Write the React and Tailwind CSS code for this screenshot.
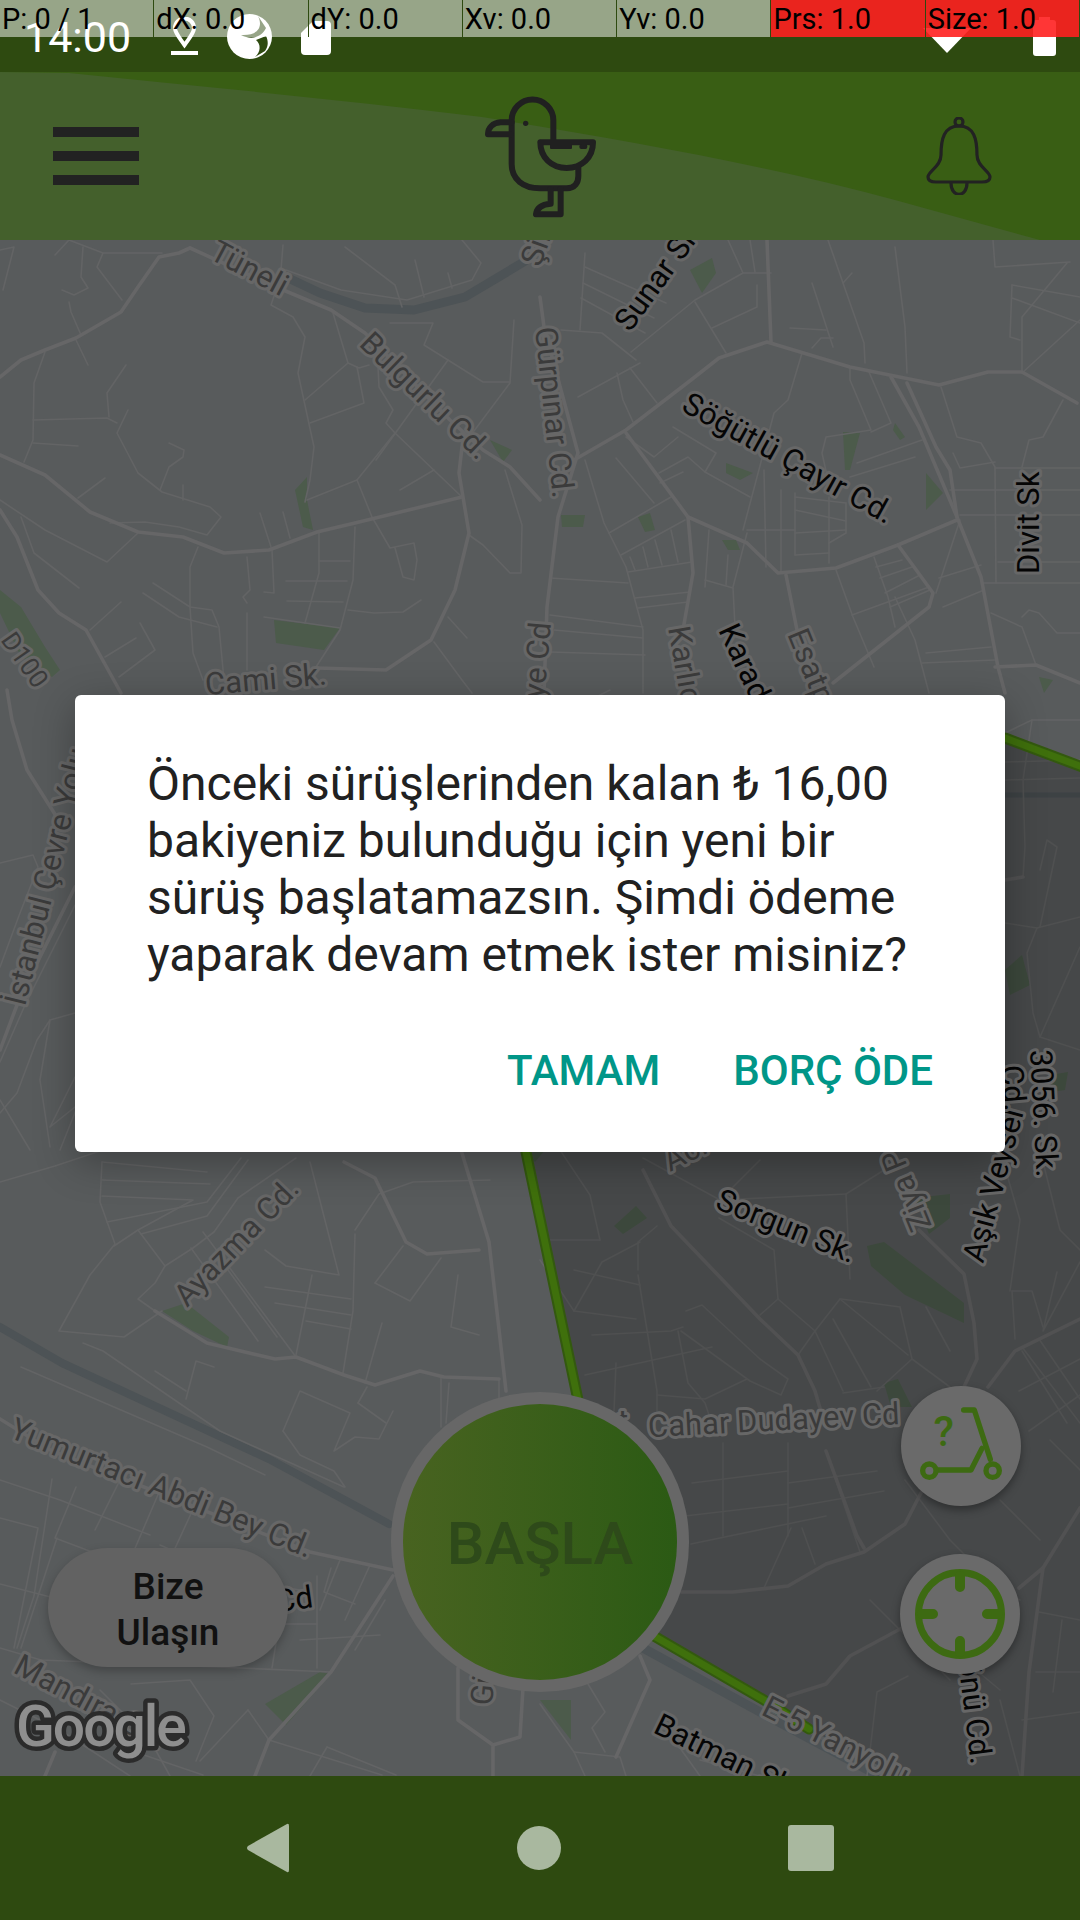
import React from "react";

// pointer location debug strip
const pointerCells = [
  { label: "P: 0 / 1" },
  { label: "dX: 0.0" },
  { label: "dY: 0.0" },
  { label: "Xv: 0.0" },
  { label: "Yv: 0.0" },
  { label: "Prs: 1.0", red: true },
  { label: "Size: 1.0", red: true },
];

const mainRoads = [
  "0,377 21,360 45,350 76,338 121,312 138,287 159,257 179,253 190,248",
  "190,248 276,287 331,310 365,333 450,420 483,450 510,467 540,500",
  "0,455 45,475 90,512 138,532 183,537 224,553 269,550 317,532 355,523 462,497",
  "462,447 459,473 469,533 455,590 431,640 386,670 317,668",
  "0,510 17,537 38,590 59,613 86,630 121,693",
  "540,297 544,327 578,453 558,517 547,607 544,693",
  "574,460 626,430 691,380 719,358 767,342 850,367 939,385 988,372 1022,372 1077,403",
  "767,240 771,342",
  "626,433 688,517 693,573 683,630",
  "688,517 747,543 778,573 836,568 898,545 957,520",
  "891,377 919,427 957,517 981,577 998,667 1005,693",
  "907,383 936,447 950,470 957,517",
  "786,575 797,630",
  "898,545 933,593 929,607 833,683",
  "995,667 1036,665 1080,683",
  "155,1311 207,1343 275,1359 296,1357 344,1375 375,1385 420,1371 444,1377 499,1379",
  "461,1150 489,1242 506,1391",
  "344,1162 375,1178 406,1242 427,1254 479,1250",
  "0,1419 52,1451 310,1552 393,1570",
  "393,1576 331,1672 269,1740 255,1776",
  "643,1170 671,1226 760,1319 798,1355 815,1391 822,1415",
  "826,1451 857,1536 864,1548",
  "681,1592 733,1592 788,1586 826,1564 864,1552 905,1524 922,1491",
  "919,1230 964,1274 974,1323 977,1359 964,1387",
  "988,1387 1015,1351 1080,1319",
  "788,1696 826,1684 850,1656 902,1628",
  "1019,1588 1043,1568 1029,1672 1022,1776",
  "1043,1568 1080,1508",
  "7,690 12,720 27,770 63,827",
  "75,887 20,997 0,1050",
  "458,1668 458,1720 493,1745 493,1776",
  "523,1688 520,1737 493,1745",
  "640,1656 650,1680 616,1757",
  "55,1752 45,1776",
  "1005,880 1023,877",
];

const thinRoads = [
  "69,302 71,312 81,335", "76,340 88,365", "45,352 34,383 33,440 24,462", "33,420 107,418 117,423", "33,443 78,446",
  "126,365 107,393 109,417", "128,410 117,433 138,473 162,492 210,507 221,517 207,535 179,527 145,522 110,523",
  "169,443 184,450 183,457 169,467 160,490", "183,485 183,500", "105,478 78,498", "21,517 34,553 79,588",
  "0,500 45,530 107,562 138,533", "198,547 190,567 190,607 193,653 203,680", "247,557 250,590 243,597 247,603",
  "272,550 274,593 264,592", "260,513 271,547", "283,512 290,538", "319,533 319,573 305,623",
  "355,527 353,580 340,630 316,667", "319,561 350,561", "286,581 347,581", "287,601 343,602",
  "348,610 374,613 403,612 421,600", "264,617 340,628", "357,480 372,517 390,548 414,543 417,560 414,580 403,577 395,548",
  "307,500 357,480 395,433 386,423 393,410 379,387 378,367", "395,433 462,497",
  "276,290 271,305 293,317 305,337 298,373 314,447 310,480 305,502", "305,400 348,363", "310,423 364,403 357,367",
  "333,313 348,363 359,368 369,365", "390,323 433,323 424,345 483,382 510,382", "462,447 510,383 514,320",
  "376,460 448,360", "400,490 434,470", "505,470 522,525 521,573 510,573 483,545 469,535",
  "90,630 121,602", "105,657 136,638", "119,677 155,650 140,623", "143,593 179,617 217,627",
  "153,583 190,607 212,610 219,627 224,680", "247,613 247,670", "434,642 462,680 472,693", "448,617 467,638",
  "0,250 14,247 3,290", "55,255 69,240", "69,240 103,253 162,253", "103,253 97,267 122,300",
  "83,247 81,277 88,288 74,295 62,290", "283,245 281,270", "345,247 395,285 402,307", "415,260 424,297", "448,273 452,288",
  "286,270 341,290 407,300 472,280 481,263 462,240",
  "585,253 580,330", "585,267 666,303", "583,283 654,318", "581,298 645,333", "561,330 602,333 636,360", "640,363 578,397",
  "617,373 623,400 633,422", "630,368 657,403", "631,352 695,300 743,273 771,273", "695,302 726,353", "712,328 757,307 757,285",
  "728,240 743,273", "750,240 755,272", "828,240 843,283 864,343 865,363", "852,273 843,283", "812,283 833,347", "790,328 826,330",
  "812,348 821,338 833,338", "802,353 788,400 774,413 743,530", "895,247 905,327 907,373", "993,240 995,267 1070,262",
  "1012,285 1010,337 1020,340", "1012,298 1080,323", "1012,285 1080,297", "1067,263 1022,317 1022,372", "1080,320 1022,373",
  "1063,400 1043,437 1029,440 1022,467", "941,387 957,437 981,443 995,467 996,583", "953,453 960,468 995,462",
  "995,468 1080,468", "950,490 1080,490", "960,515 1080,515", "998,562 1080,562", "984,583 1080,583",
  "850,368 850,380 871,430 826,437 822,453 828,480", "869,372 891,423 871,432", "922,440 857,463", "915,457 850,477",
  "673,427 716,453 705,472 750,497", "626,437 654,457 678,437", "659,473 688,457 705,472", "660,483 683,472",
  "609,533 671,497", "616,458 654,503", "621,555 685,520", "585,460 604,523 626,567 643,630 643,693",
  "630,557 635,570", "643,547 648,567", "655,540 662,565", "671,530 678,562", "628,572 692,562", "550,578 628,583",
  "635,598 690,592", "638,608 688,602", "643,627 550,615", "554,630 643,638", "550,652 645,655",
  "709,530 705,587", "728,555 726,585", "705,580 733,588", "733,587 747,533", "733,588 735,627",
  "764,470 766,567", "781,490 781,573", "795,493 795,555", "829,497 829,563", "846,503 846,533 829,543", "795,497 846,503",
  "795,510 846,521", "795,533 846,530", "795,555 829,553", "747,530 795,530", "874,557 888,597 895,627",
  "876,567 902,560", "880,578 912,567", "885,593 920,575", "890,607 930,590", "836,570 853,617 874,667", "852,615 929,587",
  "936,593 960,520", "939,578 981,565", "943,607 984,590", "926,653 991,647", "922,663 995,660",
  "1022,617 1029,610 1039,613 1057,633 1080,633", "991,613 1022,627 1036,665", "895,597 915,640 929,693",
  "0,863 33,855 38,867 20,913 0,967", "75,1013 50,1020 37,1040 17,1093 0,1113", "50,1020 40,1080 50,1147", "75,1077 50,1127 75,1107",
  "75,905 25,1005 0,1062", "1005,762 1080,760", "1005,780 1080,778",
  "1032,720 1023,780 1025,847 1023,877", "1005,923 1037,928 1080,917", "1005,733 1032,720 1080,720",
  "1040,927 1057,847 1047,840 1040,870", "1037,928 1027,953 1033,1013 1040,1037 1080,1050", "1040,1037 1080,947",
  "0,1182 55,1166 103,1150", "102,1162 100,1202 115,1244 90,1275 59,1331 124,1337 162,1311", "102,1162 207,1172", "102,1180 210,1184",
  "102,1196 193,1200 138,1230 114,1246", "107,1222 207,1202 241,1158", "141,1234 207,1216 248,1160",
  "138,1230 165,1266 193,1248 214,1232 238,1198 296,1158", "165,1266 155,1283 138,1299 155,1311", "203,1232 296,1357",
  "191,1248 258,1341", "228,1270 277,1337", "265,1287 351,1299", "275,1303 351,1315", "306,1321 351,1329", "296,1355 312,1275",
  "265,1250 286,1266 339,1275 310,1162", "355,1234 353,1311 343,1373", "355,1230 379,1194 413,1182 490,1180",
  "375,1283 410,1301 441,1258", "375,1283 403,1246", "458,1275 451,1327 479,1335", "382,1323 365,1383",
  "83,1343 103,1351 220,1431 344,1487", "21,1367 207,1447 265,1475",
  "283,1431 300,1391 350,1413 334,1451 355,1437 379,1439 393,1411", "283,1431 300,1455 334,1471 345,1487",
  "358,1403 386,1423", "358,1403 367,1387", "186,1399 196,1361 214,1367", "155,1371 186,1391",
  "0,1518 38,1528 14,1648", "0,1584 62,1600", "52,1479 34,1596 17,1648", "57,1538 21,1648", "76,1487 55,1538 124,1564",
  "0,1648 41,1660 241,1668 331,1672", "272,1668 279,1624 317,1624", "317,1576 317,1668", "331,1568 324,1592 355,1604",
  "131,1684 190,1680 214,1716 196,1761", "248,1710 269,1740 382,1775", "327,1747 310,1776", "327,1747 396,1775",
  "79,1733 203,1775", "248,1710 200,1761", "441,1377 441,1427", "449,1383 446,1423", "499,1379 499,1399",
  "638,1270 638,1242 657,1226", "638,1275 657,1391 657,1415", "574,1311 636,1319", "574,1311 602,1262 640,1242",
  "585,1375 712,1347", "592,1335 671,1331 683,1327", "686,1311 702,1305 760,1359 788,1379 781,1395 750,1381 681,1331",
  "678,1331 688,1383 705,1403 709,1415", "616,1363 614,1411", "657,1395 705,1399 747,1379",
  "778,1299 815,1331 843,1391", "833,1319 871,1387", "840,1299 908,1355", "900,1307 912,1359 950,1387", "926,1307 950,1351",
  "841,1299 900,1307", "840,1299 815,1331 798,1355", "760,1315 778,1299", "843,1393 884,1387", "912,1359 877,1391",
  "778,1299 774,1250 719,1218", "846,1194 850,1279", "788,1443 788,1536", "723,1443 723,1536", "685,1516 788,1504",
  "692,1483 788,1471", "788,1483 877,1471", "788,1508 884,1491", "691,1544 826,1516", "826,1451 860,1552",
  "764,1588 791,1528", "802,1528 815,1564", "1022,1347 1080,1423", "1022,1351 1067,1423", "1039,1339 1080,1399",
  "1019,1391 1080,1359", "1029,1431 1080,1395", "1012,1291 1015,1339", "1012,1291 1032,1291 1043,1327", "1057,1272 1043,1331 1080,1262",
  "1039,1612 1080,1620", "1036,1672 1080,1672", "1022,1720 1080,1712", "1062,1620 1053,1692", "867,1776 877,1692 908,1676",
  "588,1684 605,1712 592,1728 605,1752", "540,1704 574,1752 585,1776", "574,1752 620,1757 626,1776",
  "643,1158 720,1200 846,1194", "720,1200 760,1160", "846,1194 900,1160", "560,1150 590,1195 600,1240", "540,1260 574,1311",
  // extra block lines in the busy corners
  "0,1480 60,1500 150,1535", "0,1700 60,1730 130,1776", "100,1690 150,1740 170,1776", "160,1545 240,1580 300,1590",
  "120,1480 95,1530", "160,1490 130,1560", "195,1505 165,1570", "340,1560 320,1610", "370,1565 345,1620",
  "300,1640 380,1635", "385,1600 355,1650", "540,1240 600,1240", "574,1270 640,1285", "1040,1150 1060,1230 1080,1250",
  "1000,1150 1020,1220 1010,1291", "1050,1440 1080,1470", "1000,1500 1040,1540", "950,1540 1000,1590 1020,1600",
  "905,1480 950,1540", "870,1600 950,1680", "1000,1700 1020,1776", "940,1640 1000,1690", "700,1760 760,1776",
  "660,1720 700,1776", "0,1100 30,1150", "80,1100 60,1150", "590,700 610,690",
];

const parks = [
  "0,590 21,607 45,647 60,670 52,677 21,657 0,613", "274,620 340,628 324,650 276,643", "295,490 307,477 307,500 313,530 303,527",
  "490,440 512,450 503,462", "690,270 712,258 716,273 702,293", "561,515 585,515 583,527 562,527", "638,517 650,513 655,530 645,532",
  "843,432 860,433 850,470 845,470", "726,463 753,473 740,480 726,473", "895,423 905,437 900,440 893,430", "722,540 736,540 740,550 728,550",
  "926,473 943,493 926,510", "1039,677 1053,680 1044,693", "162,1311 186,1303 229,1337 227,1347 193,1331",
  "265,1704 320,1672 331,1674 286,1725", "614,1226 636,1206 647,1218 623,1234", "867,1246 884,1242 964,1303 964,1323 905,1295 871,1266",
  "915,1198 950,1194 950,1218 929,1234", "884,1383 898,1379 912,1407 891,1407", "540,1700 571,1700 571,1740", "1005,970 1022,955 1030,985 1010,995",
  "1050,1075 1068,1072 1065,1090 1052,1092", "522,1150 545,1150 535,1162",
];

const labels = [
  { t: "Tüneli", x: 208, y: 258, r: 28 },
  { t: "Bulgurlu Cd.", x: 358, y: 345, r: 44 },
  { t: "Gürpınar Cd.", x: 535, y: 328, r: 84 },
  { t: "Sunar Sk.", x: 630, y: 333, r: -54, k: true },
  { t: "Şile", x: 540, y: 268, r: -70 },
  { t: "Söğütlü Çayır Cd.", x: 680, y: 410, r: 29, k: true },
  { t: "Divit Sk", x: 1039, y: 574, r: -90, k: true },
  { t: "Karlıova", x: 668, y: 628, r: 80 },
  { t: "Karadeniz", x: 718, y: 630, r: 65, k: true },
  { t: "Esatpaşa", x: 787, y: 634, r: 68 },
  { t: "Cami Sk.", x: 206, y: 695, r: -5 },
  { t: "Dereye Cd", x: 551, y: 623, r: -85, a: "end" },
  { t: "İstanbul Çevre Yolu", x: 25, y: 1007, r: -76 },
  { t: "D100", x: 0, y: 640, r: 55, s: 26 },
  { t: "Ayazma Cd.", x: 187, y: 1308, r: -46 },
  { t: "Yumurtacı Abdi Bey Cd.", x: 8, y: 1437, r: 22 },
  { t: "Cd", x: 314, y: 1607, r: -8, a: "end", k: true },
  { t: "Mandıra Cd.", x: 12, y: 1672, r: 28 },
  { t: "Sorgun Sk.", x: 714, y: 1208, r: 22, k: true },
  { t: "Ziya Paşa", x: 932, y: 1226, r: -112 },
  { t: "Aşık Veysel", x: 983, y: 1264, r: -75, k: true },
  { t: "3056. Sk.", x: 1030, y: 1050, r: 87, k: true },
  { t: "Cd.", x: 1001, y: 1066, r: 85, k: true },
  { t: "Acı", x: 670, y: 1172, r: -27 },
  { t: "Cahar Dudayev Cd", x: 900, y: 1424, r: -3, a: "end" },
  { t: "t", x: 618, y: 1432, r: 0 },
  { t: "E-5 Yanyolu", x: 760, y: 1714, r: 27 },
  { t: "Batman Sk", x: 652, y: 1732, r: 26, k: true },
  { t: "İnönü Cd.", x: 971, y: 1765, r: 83, a: "end", k: true },
  { t: "Gürpınar", x: 492, y: 1706, r: -85 },
];

function MapLayer() {
  return (
    <svg className="absolute inset-0 w-full h-full" viewBox="0 240 1080 1536" fill="none">
      <rect x="0" y="240" width="1080" height="1536" fill="#585b5c" />
      {parks.map((p, i) => (
        <polygon key={i} points={p} fill="#4c5b4b" />
      ))}
      <g stroke="#4d5356" strokeLinecap="round" strokeLinejoin="round">
        <polyline points="286,277 320,293 365,308 414,310 465,297 527,260" strokeWidth="9" />
        <polyline points="0,1327 62,1363 269,1459 389,1524" strokeWidth="8" />
        <polyline points="643,1648 760,1712 890,1782" strokeWidth="9" />
        <polyline points="1005,795 1080,795" strokeWidth="5" />
      </g>
      <g stroke="#636465" strokeWidth="1.6" strokeLinecap="round" strokeLinejoin="round">
        {thinRoads.map((r, i) => (
          <polyline key={i} points={r} />
        ))}
      </g>
      <g stroke="#666667" strokeWidth="3.6" strokeLinecap="round" strokeLinejoin="round">
        {mainRoads.map((r, i) => (
          <polyline key={i} points={r} />
        ))}
      </g>
      {/* darker zone outside the service area */}
      <polygon points="1080,767 1005,738 800,800 526,1152 578,1395 654,1636 809,1729 925,1790 1080,1790" fill="rgba(0,0,0,0.2)" />
      <g strokeLinecap="round" strokeLinejoin="round" stroke="#33590f" strokeWidth="11">
        <polyline points="1005,738 1085,768" />
        <polyline points="526,1152 578,1400" />
        <polyline points="654,1636 764,1700 809,1729" />
      </g>
      <g strokeLinecap="round" strokeLinejoin="round" stroke="#3f700c" strokeWidth="7">
        <polyline points="1005,738 1085,768" />
        <polyline points="526,1152 578,1400" />
        <polyline points="654,1636 764,1700 809,1729" />
      </g>
      {labels.map((l) => (
        <text
          key={l.t + l.x}
          x={l.x}
          y={l.y}
          fontSize={l.s || 31}
          textAnchor={l.a || "start"}
          transform={`rotate(${l.r} ${l.x} ${l.y})`}
          fill={l.k ? "#050505" : "#3b3b3b"}
          stroke="#676767"
          strokeWidth="6"
          strokeLinejoin="round"
          paintOrder="stroke"
        >
          {l.t}
        </text>
      ))}
      <text
        x="16"
        y="1746"
        fontSize="57"
        fontWeight="500"
        fill="#8e8e8e"
        stroke="#2b2b2b"
        strokeWidth="9"
        strokeLinejoin="round"
        paintOrder="stroke"
        letterSpacing="-2"
      >
        Google
      </text>
    </svg>
  );
}

function PinIcon() {
  return (
    <svg className="w-[27px] h-[38px]" viewBox="0 0 27 38" fill="none" stroke="#fff" strokeWidth="4">
      <path d="M13.5 28 C8 20 4 16 4 11 A9.5 9.5 0 0 1 23 11 C23 16 19 20 13.5 28 Z" />
      <path d="M0 36 H27" />
    </svg>
  );
}

function SwirlIcon() {
  return (
    <svg className="w-[45px] h-[45px]" viewBox="0 0 45 45" fill="none">
      <circle cx="22.5" cy="22.5" r="22.5" fill="#fff" />
      <path d="M31 2 C36 12 32 22 14 21 C24 26 34 24 39 14" fill="#2e4a10" />
      <path d="M29 26 C34 30 34 38 28 43 L38 37 C42 32 41 26 39 22 Z" fill="#2e4a10" />
    </svg>
  );
}

function CardIcon() {
  return (
    <svg className="w-[30px] h-[34px]" viewBox="0 0 30 34">
      <path d="M12 0 H26 A4 4 0 0 1 30 4 V30 A4 4 0 0 1 26 34 H4 A4 4 0 0 1 0 30 V12 Z" fill="#fff" />
    </svg>
  );
}

function DuckIcon() {
  return (
    <svg className="w-[160px] h-[150px]" viewBox="0 0 480 450" fill="none" stroke="#202020" strokeWidth="18" strokeLinejoin="round" strokeLinecap="round">
      <path d="M280 178 V118 A62 62 0 0 0 155 118 V250 C155 295 190 322 240 322 H320 C345 322 355 305 355 285 V258" />
      <path d="M155 124 H122 C98 126 84 140 84 160 H152" />
      <path d="M241 184 H399 C399 230 365 261 320 261 C275 261 241 230 241 184 Z" />
      <path d="M272 325 V368 C245 370 230 382 228 400 H302 V325" />
      <circle cx="197" cy="127" r="8" fill="#202020" stroke="none" />
      <rect x="270" y="190" width="66" height="14" rx="3" fill="#202020" stroke="none" />
      <rect x="358" y="190" width="24" height="14" rx="6" fill="#202020" stroke="none" />
    </svg>
  );
}

function BellIcon() {
  return (
    <svg className="w-[66px] h-[78px]" viewBox="926 117 66 78" fill="none" stroke="#222" strokeWidth="3.2" strokeLinejoin="round">
      <circle cx="959" cy="122" r="4" />
      <path d="M959 126 C944 126 941 139 941 155 C941 167 928 171 928 177 C928 180 931 182 936 182 H982 C987 182 990 180 990 177 C990 171 977 167 977 155 C977 139 974 126 959 126 Z" />
      <path d="M951 183 C951 198 967 198 967 183" />
    </svg>
  );
}

function ScooterIcon() {
  return (
    <svg className="w-[120px] h-[120px]" viewBox="60 48 360 360" fill="none" stroke="#3d6a12" strokeWidth="16" strokeLinecap="round" strokeLinejoin="round">
      <path d="M248 120 H280 L328 268" />
      <path d="M303 235 L270 300 H168" />
      <circle cx="145" cy="302" r="20" />
      <circle cx="335" cy="302" r="20" />
      <text x="188" y="228" textAnchor="middle" fontSize="126" fontWeight="500" fill="#3d6a12" stroke="none">?</text>
    </svg>
  );
}

function TargetIcon() {
  return (
    <svg className="w-[120px] h-[120px]" viewBox="0 0 120 120" fill="none" stroke="#3d6a12" strokeLinecap="round">
      <circle cx="60" cy="60" r="41.5" strokeWidth="7" />
      <path d="M60 22 V33 M60 87 V98 M22 60 H33 M87 60 H98" strokeWidth="10" />
    </svg>
  );
}

export default function App() {
  return (
    <div className="relative w-[1080px] h-[1920px] overflow-hidden flex flex-col bg-[#585b5c] font-[Roboto,sans-serif]">
      {/* Status bar */}
      <div className="h-[72px] shrink-0 flex items-center bg-[#2e4a10] pl-[24px] pr-[24px] text-white">
        <span className="text-[43px] leading-none w-[105px] pt-[2px] whitespace-nowrap">14:00</span>
        <div className="ml-[42px]"><PinIcon /></div>
        <div className="ml-[29px]"><SwirlIcon /></div>
        <div className="ml-[29px] mt-[4px]"><CardIcon /></div>
        <svg className="ml-auto w-[48px] h-[25px] mt-[8px]" viewBox="0 0 48 25">
          <path d="M0 0 H48 L24 25 Z" fill="#fff" />
        </svg>
        <svg className="ml-[62px] w-[23px] h-[39px]" viewBox="0 0 23 39">
          <path d="M6 0 H17 V3 H20 A3 3 0 0 1 23 6 V36 A3 3 0 0 1 20 39 H3 A3 3 0 0 1 0 36 V6 A3 3 0 0 1 3 3 H6 Z" fill="#fff" />
        </svg>
      </div>

      {/* Pointer location overlay */}
      <div className="absolute top-0 left-0 w-full h-[37px] grid grid-cols-7 z-20">
        {pointerCells.map((c) => (
          <div
            key={c.label}
            className={`pl-[2px] text-[29px] leading-[38px] text-black whitespace-nowrap overflow-hidden border-r border-[#2e4a10] ${
              c.red ? "bg-[rgba(255,32,32,0.9)]" : "bg-white/50"
            }`}
          >
            {c.label}
          </div>
        ))}
      </div>

      {/* Toolbar */}
      <div className="relative h-[168px] shrink-0 bg-[#395e14] flex items-center justify-between pl-[53px] pr-[88px]">
        <svg className="absolute inset-0 w-full h-full" viewBox="0 72 1080 168" preserveAspectRatio="none">
          <path d="M0 72 L69 73 C207 87 344 100 482 117 C620 140 758 163 895 200 L1040 240 H0 Z" fill="#44602c" />
        </svg>
        <div className="relative w-[86px] flex flex-col gap-[14px]">
          <div className="h-[10px] bg-[#222]" />
          <div className="h-[10px] bg-[#222]" />
          <div className="h-[10px] bg-[#222]" />
        </div>
        <div className="relative ml-[15px]"><DuckIcon /></div>
        <div className="relative"><BellIcon /></div>
      </div>

      {/* Map */}
      <div className="relative flex-1">
        <MapLayer />

        <button className="absolute left-[48px] top-[1308px] w-[240px] h-[119px] pt-[4px] rounded-[60px] bg-[#626262] shadow-[0_4px_10px_rgba(0,0,0,0.25)] text-[37px] leading-[46px] font-medium text-[#111]">
          Bize<br />Ulaşın
        </button>

        <div className="absolute left-[391px] top-[1152px] w-[298px] h-[300px] rounded-full bg-[#676767] p-[12px]">
          <div className="w-full h-full pt-[4px] rounded-full bg-gradient-to-r from-[#486320] to-[#2b5a14] flex items-center justify-center">
            <span className="text-[60px] font-medium text-[#2e4a1a]">BAŞLA</span>
          </div>
        </div>

        <div className="absolute left-[901px] top-[1146px] w-[120px] h-[120px] rounded-full bg-[#6a6a6a] shadow-[0_4px_8px_rgba(0,0,0,0.35)]">
          <ScooterIcon />
        </div>
        <div className="absolute left-[900px] top-[1314px] w-[120px] h-[120px] rounded-full bg-[#6a6a6a] shadow-[0_4px_8px_rgba(0,0,0,0.35)]">
          <TargetIcon />
        </div>
      </div>

      {/* Navigation bar */}
      <div className="h-[144px] shrink-0 bg-[#2e4a10] flex items-center justify-center gap-[227px]">
        <svg className="w-[44px] h-[50px]" viewBox="0 0 44 50">
          <path d="M41 1 L2 23 Q0 25 2 27 L41 49 Q43 50 43 47 V3 Q43 0 41 1 Z" fill="#a9b89f" />
        </svg>
        <div className="w-[44px] h-[44px] rounded-full bg-[#a9b89f]" />
        <div className="w-[46px] h-[46px] rounded-[3px] bg-[#a9b89f]" />
      </div>

      {/* Dialog */}
      <div className="absolute left-[75px] top-[695px] w-[930px] h-[457px] rounded-[6px] bg-white shadow-[0_10px_40px_rgba(0,0,0,0.3)] pt-[60px] px-[72px] flex flex-col z-10">
        <p className="text-[48px] leading-[57px] text-[#212121] whitespace-nowrap">
          Önceki sürüşlerinden kalan ₺ 16,00<br />
          bakiyeniz bulunduğu için yeni bir<br />
          sürüş başlatamazsın. Şimdi ödeme<br />
          yaparak devam etmek ister misiniz?
        </p>
        <div className="mt-[65px] flex justify-end gap-[73px] text-[42px] leading-[46px] font-medium text-[#009688] whitespace-nowrap">
          <span>TAMAM</span>
          <span>BORÇ ÖDE</span>
        </div>
      </div>
    </div>
  );
}
